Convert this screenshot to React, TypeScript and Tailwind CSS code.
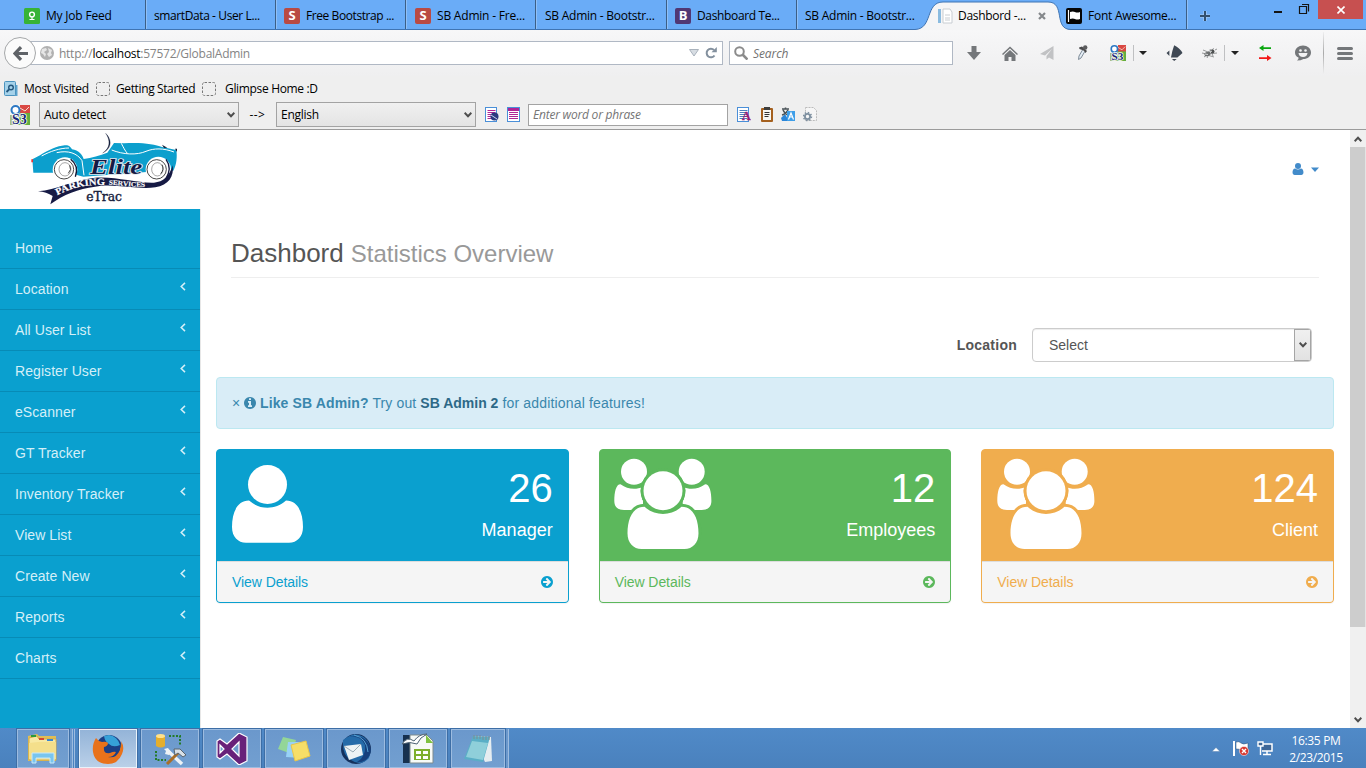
import React from "react";

const INFO_CIRCLE =
  "M1152 1376v-160q0-14-9-23t-23-9h-96v-512q0-14-9-23t-23-9h-320q-14 0-23 9t-9 23v160q0 14 9 23t23 9h96v320h-96q-14 0-23 9t-9 23v160q0 14 9 23t23 9h448q14 0 23-9t9-23zm-128-896v-160q0-14-9-23t-23-9h-192q-14 0-23 9t-9 23v160q0 14 9 23t23 9h192q14 0 23-9t9-23zm640 416q0 209-103 385.5t-279.5 279.5-385.5 103-385.5-103-279.5-279.5-103-385.5 103-385.5 279.5-279.5 385.5-103 385.5 103 279.5 279.5 103 385.5z";
const ARROW_CIRCLE =
  "M1413 896q0-27-18-45l-91-91-362-362q-18-18-45-18t-45 18l-91 91q-18 18-18 45t18 45l189 189h-502q-26 0-45 19t-19 45v128q0 26 19 45t45 19h502l-189 189q-19 19-19 45t19 45l91 91q18 18 45 18t45-18l362-362 91-91q18-18 18-45zm251 0q0 209-103 385.5t-279.5 279.5-385.5 103-385.5-103-279.5-279.5-103-385.5 103-385.5 279.5-279.5 385.5-103 385.5 103 279.5 279.5 103 385.5z";
const USER_BODY =
  "M17 35.6C22.500 40.500 29 42.700 35.500 42.700S48.500 40.500 54 35.600C66 35.600 71 48 71 62C71 72 65 77.700 57 77.700H14C6 77.700 0 72 0 62C0 48 5 35.600 17 35.600Z";

function GlyphIcon({ d, className }: { d: string; className: string }) {
  return (
    <svg viewBox="128 128 1536 1536" className={className} fill="currentColor">
      <path d={d} />
    </svg>
  );
}

function UserIcon({ className }: { className: string }) {
  return (
    <svg viewBox="0 0 71 78" className={className} fill="currentColor">
      <circle cx="35.500" cy="19.500" r="19.500" />
      <path d={USER_BODY} />
    </svg>
  );
}

function UsersIcon({ bg }: { bg: string }) {
  return (
    <svg viewBox="0 0 98 91" className="h-[91px] w-[98px]" fill="#fff">
      <circle cx="20" cy="13.700" r="13" />
      <circle cx="77.700" cy="13.700" r="13" />
      <path d="M6.500 26.300C11 29.500 15 30.800 20 30.800C23 30.800 26 30 29 29V52H10C4 52 .3 49 .3 43C.3 34 2 26.300 6.500 26.300Z" />
      <path d="M91.200 26.300C86.700 29.500 82.700 30.800 77.700 30.800C74.700 30.800 71.700 30 68.700 29V52H87.700C93.700 52 97.400 49 97.400 43C97.400 34 95.700 26.300 91.200 26.300Z" />
      <g transform="translate(13.500 13.200)">
        <circle cx="35.500" cy="19.500" r="22.400" fill={bg} />
        <path d={USER_BODY} stroke={bg} strokeWidth="6" />
        <circle cx="35.500" cy="19.500" r="22.400" fill={bg} />
        <path d={USER_BODY} />
        <circle cx="35.500" cy="19.500" r="19.500" />
      </g>
    </svg>
  );
}

function Logo() {
  return (
    <svg viewBox="90 12 465 225" className="h-[75px] w-[155px]">
      <path d="M97 94L120 82C145 66 172 54 194 52C208 51 212 58 216 64C236 68 246 78 251 93C275 90 300 82 322 74L342 45L372 46C420 42 465 48 486 57L529 66C532 85 530 110 520 128L440 132L250 146L228 140L165 134L100 134Z" fill="#0c9fcd" />
      <path d="M125 84C150 70 180 60 207 60M335 66C370 80 410 82 438 70C462 60 490 60 522 72M364 46C370 58 375 68 382 76M170 74C205 66 232 76 246 98L252 142" fill="none" stroke="#fff" strokeWidth="3" />
      <path d="M317 16C335 34 338 60 308 75C331 60 332 38 317 16Z" fill="#15203c" stroke="#15203c" strokeWidth=".8" />
      <path d="M94 94h5v9h-5z" fill="#e33" />
      <path d="M486 50l16 9-10 1z M525 62h6v10z" fill="#15203c" />
      <circle cx="195" cy="125" r="37" fill="#fff" />
      <circle cx="475" cy="124" r="38" fill="#fff" />
      <path d="M212 94Q238 114 226 146" fill="none" stroke="#121735" strokeWidth="4" />
      <g fill="none" stroke="#222">
        <circle cx="192" cy="124" r="29" strokeWidth="2.500" />
        <ellipse cx="195" cy="124" rx="18" ry="20" strokeWidth="1.200" />
        <circle cx="470" cy="124" r="29" strokeWidth="2.500" />
        <ellipse cx="472" cy="124" rx="17" ry="20" strokeWidth="1.200" />
        <path d="M209 112q7 13-4 24M486 110q8 14-4 27" strokeWidth="2.500" />
      </g>
      <path d="M114 190C170 186 215 157 280 150C340 143 410 166 462 164C490 162 508 145 518 112C523 145 506 172 466 178C410 186 340 164 285 176C235 182 190 200 151 229L158 204Q140 192 114 190Z" fill="#161a44" />
      <path d="M498 94Q517 120 498 152" fill="none" stroke="#161a44" strokeWidth="4" />
      <path id="ribbon-left" d="M172 202C215 178 262 169 320 171" fill="none" />
      <path id="ribbon-right" d="M326 170C360 171 395 179 438 176" fill="none" />
      <text fill="#fff" stroke="#fff" strokeWidth=".6" fontFamily="Liberation Serif, serif" fontWeight="700" fontSize="29">
        <textPath href="#ribbon-left" textLength="148" lengthAdjust="spacingAndGlyphs">PARKING</textPath>
      </text>
      <text fill="#fff" stroke="#fff" strokeWidth=".4" fontFamily="Liberation Serif, serif" fontWeight="700" fontSize="21">
        <textPath href="#ribbon-right" textLength="110" lengthAdjust="spacingAndGlyphs">SERVICES</textPath>
      </text>
      <text x="270" y="138" textLength="157" lengthAdjust="spacingAndGlyphs" fill="#151a44" stroke="#dfe6ee" strokeWidth="5" paintOrder="stroke" fontFamily="Liberation Serif, serif" fontStyle="italic" fontWeight="700" fontSize="64">Elite</text>
      <text x="259" y="219" textLength="107" lengthAdjust="spacingAndGlyphs" fill="#15203c" stroke="#15203c" strokeWidth="1.200" fontFamily="DejaVu Serif, serif" fontSize="37">eTrac</text>
    </svg>
  );
}

function S3Icon() {
  return (
    <svg viewBox="0 0 20 20" className="h-5 w-5">
      <rect width="20" height="20" fill="#f4f6f4" />
      <rect x="10" width="10" height="9" fill="#d94843" />
      <rect x="9" y="8" width="11" height="12" fill="#63ad3f" />
      <path d="M0 10h9v10H0z" fill="#a9bd8a" />
      <circle cx="5.500" cy="5" r="4" fill="#fff" stroke="#2c78c4" strokeWidth="2" />
      <path d="M10 3l5 3 4-4" stroke="#f5d9cc" fill="none" />
      <text x="2" y="18.500" fontSize="14" fontWeight="700" fontFamily="Liberation Serif, serif" fill="#182878" stroke="#fff" strokeWidth="1.600" paintOrder="stroke">S3</text>
    </svg>
  );
}

function SquareLetter({ letter, cls }: { letter: string; cls: string }) {
  return <span className={`flex h-4 w-4 shrink-0 items-center justify-center rounded-[2px] font-['Open_Sans',sans-serif] text-[13px] leading-none font-bold tracking-normal text-white ${cls}`}>{letter}</span>;
}

function Tab({ children, label, className = "" }: { children?: React.ReactNode; label: string; className?: string }) {
  return (
    <div className={`flex h-[29px] shrink-0 items-center gap-[6px] border-r border-[#3c5f86] pt-[2px] shadow-[1px_0_0_#8fc0f8] ${className}`}>
      {children}
      <span className="whitespace-nowrap">{label}</span>
    </div>
  );
}

function TabStrip() {
  return (
    <div className="relative flex h-[30px] border-b border-[#3f74b3] bg-[#6aacf7]">
      <Tab label="My Job Feed" className="w-[146px] pl-6 tracking-[-0.2px]">
        <svg viewBox="0 0 16 16" className="h-4 w-4"><rect width="16" height="16" rx="1.500" fill="#37b337" /><circle cx="8" cy="6.500" r="2.400" fill="none" stroke="#fff" strokeWidth="1.400" /><path d="M8 9v3M5.500 11.500h5" stroke="#fff" strokeWidth="1.200" /></svg>
      </Tab>
      <Tab label="smartData - User L..." className="w-[130px] pl-2 tracking-[-0.4px]" />
      <Tab label="Free Bootstrap ..." className="w-[130px] pl-2 tracking-[-0.42px]"><SquareLetter letter="S" cls="bg-[#b94a43]" /></Tab>
      <Tab label="SB Admin - Fre..." className="w-[130px] pl-[9px] tracking-[-0.2px]"><SquareLetter letter="S" cls="bg-[#b94a43]" /></Tab>
      <Tab label="SB Admin - Bootstr..." className="w-[131px] pl-[9px] tracking-[-0.25px]" />
      <Tab label="Dashboard Te..." className="w-[130px] pl-2 tracking-[-0.35px]"><SquareLetter letter="B" cls="bg-[#503773]" /></Tab>
      <div className="flex h-[29px] w-[118px] shrink-0 items-center pt-[2px] pl-2"><span className="tracking-[-0.25px] whitespace-nowrap">SB Admin - Bootstr...</span></div>
      <div className="relative h-[30px] w-[144px] shrink-0">
        <svg viewBox="0 0 156 29" className="absolute top-[1px] left-0 h-[29px] w-[156px]">
          <path d="M0 28.500C18 28 10 1 28 1H133C151 1 138 28.500 156 28.500V29H0Z" fill="#f5f5f6" />
          <path d="M0 28.500C18 28 10 1 28 1H133C151 1 138 28.500 156 28.500" fill="none" stroke="#3f74b3" />
        </svg>
        <div className="relative flex h-[29px] items-center pt-[2px] pl-[22px]">
          <svg viewBox="0 0 16 16" className="h-4 w-4"><path d="M1 1h3v14H1z" fill="#8abbe0" /><path d="M6 1h7l2 3v11H6z" fill="#fff" stroke="#c8cdd2" /><path d="M8 7h5M8 10h5M8 12h5" stroke="#c8cdd2" /></svg>
          <span className="ml-[5px] w-[80px] tracking-[-0.3px] whitespace-nowrap">Dashbord -...</span>
          <svg viewBox="0 0 8 8" className="h-2 w-2"><path d="M1 1l6 6M7 1L1 7" stroke="#85888b" strokeWidth="2.200" /></svg>
        </div>
      </div>
      <Tab label="Font Awesome..." className="w-[128px] pl-[7px] tracking-[-0.25px]">
        <svg viewBox="0 0 16 16" className="h-4 w-4"><rect width="16" height="16" rx="2" fill="#050505" /><path d="M2.500 2v12" stroke="#fff" strokeWidth="1.200" /><path d="M4 4q3-1 5 0t5 0v7q-3 1-5 0t-5 0z" fill="#fff" /></svg>
      </Tab>
      <svg viewBox="0 0 12 12" className="mt-[10px] ml-[12px] h-3 w-3 shrink-0"><path d="M6 1v10M1 6h10" stroke="#a9cdf8" strokeWidth="3.200" /><path d="M6 1v10M1 6h10" stroke="#34516f" strokeWidth="2" /></svg>
      <div className="ml-auto flex shrink-0">
        <svg viewBox="0 0 44 20" className="h-5 w-[44px]"><path d="M0 12h8" stroke="#141414" strokeWidth="2" /><path d="M25.500 6.500h7v7h-7zM28 4.500h6.500v7" fill="none" stroke="#141414" strokeWidth="1.200" /></svg>
        <div className="mr-[3px] flex h-[19px] w-[45px] items-center justify-center bg-[#c75050]">
          <svg viewBox="0 0 8 8" className="h-2 w-2"><path d="M.5.5l7 7M7.500.5l-7 7" stroke="#fff" strokeWidth="1.600" /></svg>
        </div>
      </div>
    </div>
  );
}

function Caret() {
  return <svg viewBox="0 0 8 4" className="h-1 w-2"><path d="M0 0h8L4 4z" fill="#222" /></svg>;
}

function NavRow() {
  return (
    <div className="flex h-[46px] items-center bg-linear-to-b from-[#f7f7f8] to-[#efeff0]">
      <div className="relative z-10 ml-1 flex h-8 w-8 shrink-0 items-center justify-center rounded-full border border-[#a5a7a9] bg-[#fbfbfb]">
        <svg viewBox="0 0 14 14" className="h-[15px] w-[15px]"><path d="M7.500 1L1.800 7l5.700 6M2 7h12" fill="none" stroke="#5f6368" strokeWidth="3" /></svg>
      </div>
      <div className="-ml-[6px] flex h-6 w-[693px] shrink-0 items-center border border-[#b0b8c4] bg-white pl-[9px]">
        <svg viewBox="0 0 14 14" className="h-[14px] w-[14px]"><circle cx="7" cy="7" r="7" fill="#b1b1b1" /><path d="M2 3l4-1 1 2-3 2 2 2-1 3-2-3-2-1zM8 2l4 2-1 3 1 2-3 2-2-3 2-2z" fill="#e6e6e6" /></svg>
        <span className="ml-[5px] pt-[2px] tracking-[-0.26px] text-[#848484]">http://<span className="text-black">localhost</span>:57572/GlobalAdmin</span>
        <svg viewBox="0 0 10 8" className="mr-[6px] ml-auto h-2 w-[10px]"><path d="M.5.5h9L5 7z" fill="#d7dde3" stroke="#a9b2bc" /></svg>
        <svg viewBox="0 0 12 12" className="mr-[5px] h-3 w-3"><path d="M9.500 8.500A4.300 4.300 0 1 1 9 3" fill="none" stroke="#83909e" strokeWidth="2" /><path d="M11.800 0v5.200H6.500z" fill="#83909e" /></svg>
      </div>
      <div className="ml-[6px] flex h-6 w-[224px] shrink-0 items-center border border-[#b0b8c4] bg-white pl-[4px] text-[#727272] italic">
        <svg viewBox="0 0 14 14" className="h-[14px] w-[14px]"><circle cx="5.500" cy="5.500" r="4.300" fill="none" stroke="#8b8b8b" strokeWidth="2" /><path d="M8.500 8.500l5 5" stroke="#8b8b8b" strokeWidth="2.600" /></svg>
        <span className="ml-[5px] pt-[2px] tracking-[-0.1px]">Search</span>
      </div>
      <div className="ml-[3px] flex h-full flex-1 items-center">
        <div className="flex w-9 justify-center"><svg viewBox="0 0 14 14" className="h-[14px] w-[14px]"><path d="M4.500 0h5v6H14l-7 8-7-8h4.500z" fill="#74777a" /></svg></div>
        <div className="flex w-9 justify-center"><svg viewBox="0 0 16 15" className="h-[15px] w-4"><path d="M0 8L8 .5 16 8l-1 1-7-6.500L1 9z" fill="#74777a" /><path d="M2.500 9L8 4l5.500 5v6H9.500v-4h-3v4h-4z" fill="#74777a" /></svg></div>
        <div className="flex w-[38px] justify-center"><svg viewBox="0 0 14 14" className="h-[14px] w-[14px]"><path d="M13.500 0v14L9 11.500 6.500 13.500V10L12 3 5 9.500 0 8z" fill="#c1c2c4" /></svg></div>
        <div className="flex w-8 justify-center"><svg viewBox="0 0 12 16" className="h-4 w-3"><path d="M6.500 5L3 11l-.5 3.500L5 13 8.500 7" fill="#e4edf5" stroke="#7e8b98" /><path d="M3 2.500l3-1L11 6l-1.500 2-2-2.500L3.500 4z" fill="#4a4a4c" /><circle cx="9.200" cy="2.500" r="2.200" fill="#5c5c5e" /></svg></div>
        <div className="flex w-[35px] justify-center pl-[5px]"><span className="scale-80"><S3Icon /></span></div>
        <span className="h-4 w-px bg-[#bfc0c2]" />
        <div className="flex w-[18px] justify-center"><Caret /></div>
        <div className="flex w-11 justify-center"><svg viewBox="778 134 52 50" className="h-4 w-[17px]"><path d="M803 135Q820 143 829 159L813 173H793Q796 154 803 135ZM788 151V168L779 159ZM796 178H811L803 184Z" fill="#3f4854" /></svg></div>
        <div className="flex w-7 justify-center"><svg viewBox="0 0 16 12" className="h-3 w-4"><path d="M1 3l5 2 6-3.500M0 6l5 1 10-1M2 10l3-2 7 2M8 2l3 7M13 3l2-1M5 11l2-4" stroke="#8b8d8e" strokeWidth=".9" fill="none" /><ellipse cx="5.500" cy="7" rx="3.200" ry="2" fill="#6b6e6f" transform="rotate(-20 5.500 7)" /><circle cx="10.500" cy="4.500" r="2" fill="#4d5051" /><path d="M3 7l3 .5M8 5l2-1" stroke="#d7d9da" /></svg></div>
        <span className="h-4 w-px bg-[#bfc0c2]" />
        <div className="flex w-5 justify-center"><Caret /></div>
        <div className="flex w-10 justify-center"><svg viewBox="0 0 14 16" className="h-4 w-[14px]"><path d="M1 3l4.500-3v2.200H13v1.800H5.500V6z" fill="#0aa60f" /><path d="M13.500 13L9 10v2.200H1v1.800h8V16z" fill="#f21818" /></svg></div>
        <div className="flex w-9 justify-center"><svg viewBox="0 0 16 16" className="h-4 w-4"><path d="M8 .5C12.500.5 16 3.500 16 7.500S12.500 14 8.500 14Q6 15.500 2 15.500 4 14 3.500 12.500 0 11 0 7.500C0 3.500 3.500.5 8 .5z" fill="#74777a" /><circle cx="5.500" cy="5.500" r="1.300" fill="#f3f3f4" /><circle cx="10.500" cy="5.500" r="1.300" fill="#f3f3f4" /><path d="M3.500 8h9Q12 12 8 12T3.500 8z" fill="#f3f3f4" /></svg></div>
        <span className="ml-[2px] h-[42px] w-px bg-linear-to-b from-[#efeff0] via-[#aaa] to-[#efeff0]" />
        <div className="flex w-[42px] justify-center"><svg viewBox="0 0 16 13" className="h-[13px] w-4"><path d="M1.500 1.500h13M1.500 6.500h13M1.500 11.500h13" stroke="#74777a" strokeWidth="3" strokeLinecap="round" /></svg></div>
      </div>
    </div>
  );
}

function DashedSquare() {
  return <svg viewBox="0 0 14 14" className="h-[14px] w-[14px]"><rect x=".5" y=".5" width="13" height="13" rx="2" fill="none" stroke="#777" strokeDasharray="2.500 1.500" /></svg>;
}

function Chevron({ className = "" }: { className?: string }) {
  return <svg viewBox="0 0 8 6" className={`h-[6px] w-2 ${className}`}><path d="M.6.800L4 4.300 7.400.800" fill="none" stroke="#4d4d4d" strokeWidth="2" /></svg>;
}

function ToolbarSelect({ label }: { label: string }) {
  return (
    <div className="flex h-[25px] w-[200px] items-center justify-between border border-[#a3a3a3] bg-linear-to-b from-[#f0f0f0] to-[#e4e4e4] pr-[3px] pl-1">
      <span className="pt-px tracking-[-0.25px]">{label}</span>
      <Chevron />
    </div>
  );
}

function PageIcon({ kind }: { kind: "globe" | "plain" | "letter" }) {
  return (
    <svg viewBox="0 0 14 15" className="h-[15px] w-[14px]">
      <rect x=".5" y=".5" width={kind === "plain" ? 12 : 11} height="14" fill="#fff" stroke="#4a8fd8" />
      {kind === "plain" ? <path d="M1 1h11v3H1z" fill="#b02497" /> : null}
      <path d={kind === "plain" ? "M2 5.500h9M2 7.500h9M2 9.500h9M2 11.500h9" : "M2.500 3.500h8M2.500 5.500h8M2.500 7.500h8M2.500 9.500h8M2.500 11.500h8"} stroke={kind === "letter" ? "#4d7fbd" : "#b02497"} />
      {kind === "globe" ? <g><circle cx="9.500" cy="9.500" r="4" fill="#2c397f" /><path d="M6 8l6 4" stroke="#cdd4f2" /></g> : null}
      {kind === "letter" ? <text x="5" y="13" fontSize="12" fontWeight="700" fontFamily="Liberation Serif, serif" fill="#9a1b72" stroke="#9a1b72" strokeWidth=".3">A</text> : null}
    </svg>
  );
}

function Toolbars() {
  return (
    <div className="h-[54px] border-b border-[#9b9b9b] bg-[#efefef]">
      <div className="flex h-[25px] items-center pl-1">
        <svg viewBox="0 0 14 16" className="h-4 w-[14px]"><path d="M2 4h11.500v11H2z" fill="#5da3cd" /><rect x=".5" y=".5" width="11" height="14" rx="1" fill="#a5d2ea" stroke="#4b93be" /><circle cx="7" cy="6.500" r="2.300" fill="none" stroke="#24577d" strokeWidth="1.400" /><path d="M5 8.500l-2.500 2.500" stroke="#24577d" strokeWidth="1.800" /></svg>
        <span className="ml-[6px] w-[72px] tracking-[-0.3px] whitespace-nowrap">Most Visited</span>
        <DashedSquare />
        <span className="ml-[6px] w-[86px] tracking-[-0.38px] whitespace-nowrap">Getting Started</span>
        <DashedSquare />
        <span className="ml-[9px] tracking-[-0.33px] whitespace-nowrap">Glimpse Home :D</span>
      </div>
      <div className="flex h-[27px] items-center pl-[10px]">
        <S3Icon />
        <span className="ml-[9px]"><ToolbarSelect label="Auto detect" /></span>
        <span className="w-[37px] text-center tracking-[0.4px]">--&gt;</span>
        <ToolbarSelect label="English" />
        <span className="ml-[9px]"><PageIcon kind="globe" /></span>
        <span className="ml-2"><PageIcon kind="plain" /></span>
        <div className="ml-[7px] flex h-[22px] w-[200px] items-center border border-[#a3a3a3] bg-white pl-1 tracking-[-0.22px] text-[#757575] italic">Enter word or phrase</div>
        <span className="ml-[9px]"><PageIcon kind="letter" /></span>
        <svg viewBox="0 0 12 15" className="ml-[10px] h-[15px] w-3"><rect y="1" width="12" height="14" rx="1" fill="#a4601f" /><rect x="2" y="3" width="8" height="10" fill="#f7f7f4" /><rect x="3" width="6" height="3" fill="#3d3d3d" /><path d="M3.500 5.500h5M3.500 7.500h5M3.500 9.500h4" stroke="#333" /></svg>
        <svg viewBox="0 0 14 15" className="ml-2 h-[15px] w-[14px]"><path d="M0 11l4-4 4 7H1z" fill="#2b85d8" /><path d="M1 2h7M4.500.5v1.500M2 3q2 4 5 5M7 3Q5 7 1 8" fill="none" stroke="#4a5358" strokeWidth="1.500" /><rect x="6" y="4" width="8" height="10" fill="#3e9ee8" /><path d="M7.500 12.500L10 6l2.500 6.500M8.500 10h3" fill="none" stroke="#fff" strokeWidth="1.200" /></svg>
        <svg viewBox="0 0 14 15" className="ml-2 h-[15px] w-[14px]"><path d="M2.500.5h8l3 3v10h-11z" fill="#f6f6f6" stroke="#bbb" strokeDasharray="2 1" /><circle cx="4.500" cy="9.500" r="2.600" fill="none" stroke="#7e90a0" strokeWidth="1.800" /><circle cx="4.500" cy="9.500" r="4" fill="none" stroke="#7e90a0" strokeWidth="1.500" strokeDasharray="1.500 1.600" /></svg>
      </div>
    </div>
  );
}

function PageHeader() {
  return (
    <header className="flex h-[79px] shrink-0 items-start justify-between">
      <div className="pt-[2px] pl-[30px]"><Logo /></div>
      <div className="mt-[33px] mr-[31px] flex items-center gap-[7px] text-[#428bca]">
        <UserIcon className="h-3 w-3" />
        <svg viewBox="0 0 8 5" className="h-[5px] w-2"><path d="M0 .5h8L4 5z" fill="currentColor" /></svg>
      </div>
    </header>
  );
}

const MENU = ["Home", "Location", "All User List", "Register User", "eScanner", "GT Tracker", "Inventory Tracker", "View List", "Create New", "Reports", "Charts"];

function Sidebar() {
  return (
    <nav className="w-[200px] shrink-0 bg-[#0aa0cf] pt-[19px]">
      {MENU.map((item, i) => (
        <div key={item} className="flex h-[41px] items-start justify-between border-b border-[#078bb6] pt-[10px] pr-[14px] pl-[15px] leading-5 tracking-[0.07px] text-[#d4eff8]">
          <span>{item}</span>
          {i > 0 ? <svg viewBox="0 0 6 9" className="mt-[3px] h-[9px] w-[6px]"><path d="M5 .9L1.200 4.500 5 8.100" fill="none" stroke="#d4eff8" strokeWidth="1.500" /></svg> : null}
        </div>
      ))}
    </nav>
  );
}

const CARDS = [
  { count: "26", label: "Manager", color: "#0aa0cf", box: "bg-[#0aa0cf] border-[#0aa0cf]", text: "text-[#0aa0cf]", single: true },
  { count: "12", label: "Employees", color: "#5cb85c", box: "bg-[#5cb85c] border-[#5cb85c]", text: "text-[#5cb85c]", single: false },
  { count: "124", label: "Client", color: "#f0ad4e", box: "bg-[#f0ad4e] border-[#f0ad4e]", text: "text-[#f0ad4e]", single: false },
];

function Card({ card }: { card: (typeof CARDS)[number] }) {
  return (
    <div className={`h-[154px] overflow-hidden rounded-[4px] border shadow-[0_1px_1px_rgba(0,0,0,0.05)] ${card.box}`}>
      <div className="flex h-[111px] justify-between pr-[15px] pl-[15px] text-white">
        <div className={card.single ? "pt-[15px]" : "-ml-[0.5px] pt-[8px]"}>
          {card.single ? <UserIcon className="h-[78px] w-[71px]" /> : <UsersIcon bg={card.color} />}
        </div>
        <div className="pt-[16px] text-right">
          <div className="text-[40px] leading-[44px]">{card.count}</div>
          <div className="mt-[7px] text-[18px] leading-[26px]">{card.label}</div>
        </div>
      </div>
      <div className={`flex h-[41px] items-center justify-between border-t border-[#ddd] bg-[#f5f5f5] px-[15px] ${card.text}`}>
        <span className="tracking-[-0.06px]">View Details</span>
        <GlyphIcon d={ARROW_CIRCLE} className="h-3 w-3" />
      </div>
    </div>
  );
}

function Dashboard() {
  return (
    <main className="flex min-w-0 flex-1 flex-col border-l border-[#e7e7e7] pr-4 pl-[15px]">
      <h1 className="mr-[15px] ml-[15px] flex h-[69px] items-baseline gap-[7px] border-b border-[#eee] pt-[26px] text-[26px] leading-9 text-[#555]">
        Dashbord <small className="text-[24px] text-[#999]">Statistics Overview</small>
      </h1>
      <div className="mt-[50px] mr-[22px] flex h-[34px] items-center justify-end">
        <label className="mr-[15px] font-bold tracking-[0.25px] text-[#555]">Location</label>
        <div className="flex h-[34px] w-[280px] items-center justify-between overflow-hidden rounded-[4px] border border-[#ccc] pl-4 text-[#555] shadow-[inset_0_1px_1px_rgba(0,0,0,0.075)]">
          <span>Select</span>
          <span className="flex h-full w-[17px] items-center justify-center border border-[#a5a5a5] bg-linear-to-b from-[#f0f0f0] to-[#e2e2e2]"><Chevron /></span>
        </div>
      </div>
      <div className="mt-[15px] flex h-[52px] items-center rounded-[4px] border border-[#bce8f1] bg-[#d9edf7] pl-[15px] text-[#3a87ad]">
        <span className="w-3">×</span>
        <GlyphIcon d={INFO_CIRCLE} className="mr-1 h-3 w-3" />
        <span className="whitespace-pre"><b className="tracking-[0.13px]">Like SB Admin?</b><span className="tracking-[0.12px]"> Try out </span><b className="text-[#2d6987]">SB Admin 2</b><span className="tracking-[0.17px]"> for additional features!</span></span>
      </div>
      <div className="mt-5 grid grid-cols-3 gap-[30px]">
        {CARDS.map((c) => <Card key={c.label} card={c} />)}
      </div>
    </main>
  );
}

function Scrollbar() {
  return (
    <div className="flex w-4 shrink-0 flex-col items-center bg-[#f0f0f0] pb-[5px]">
      <Chevron className="mt-[6px] mb-[5px] shrink-0 rotate-180" />
      <div className="h-[480px] w-full shrink-0 border-r border-[#e4e4e4] bg-[#cdcdcd]" />
      <Chevron className="mt-auto" />
    </div>
  );
}

function TaskButton({ children, active = false, stacked = "" }: { children: React.ReactNode; active?: boolean; stacked?: "" | "two" | "one" }) {
  return (
    <div className="flex h-[39px] shrink-0">
      <div className={`flex h-full items-center justify-center border outline outline-[#3d6ea6] ${stacked === "two" ? "w-[52px]" : stacked === "one" ? "w-[54px]" : "w-[58px]"} ${active ? "border-[#e9f2fa] bg-linear-to-b from-[#94b4d8] to-[#bad0e8]" : "border-[#9dbce0] bg-linear-to-b from-[#6b98cc] to-[#729fd0]"}`}>{children}</div>
      {stacked ? <div className="ml-px w-[3px] border-r border-[#9dbce0] bg-[#6b98cc]" /> : null}
      {stacked === "two" ? <div className="ml-px w-px bg-[#9dbce0]" /> : null}
    </div>
  );
}

function Taskbar() {
  return (
    <footer className="flex h-10 items-center bg-linear-to-b from-[#508ac8] to-[#4a81bd]">
      <div className="ml-[17px] flex gap-1 pt-px">
        <TaskButton stacked="two">
          <svg viewBox="0 0 32 32" className="h-8 w-8"><path d="M1 3l9-2 2 2h17v25H1z" fill="#dfbd55" /><path d="M2 5l8-2 2 3h17v21H2z" fill="#f8e9a3" stroke="#d1aa48" /><path d="M4 2h5v2H4z" fill="#2b9b3a" /><path d="M12 5h5v2h-5z" fill="#d64532" /><path d="M20 6h6v2h-6z" fill="#3a86cf" /><path d="M2 10q14-2 27-1v17H2z" fill="#f4df8b" /><path d="M5 20h22v10h-4v-5H9v5H5z" fill="#79c5ee" stroke="#c7e9fb" /></svg>
        </TaskButton>
        <TaskButton active>
          <svg viewBox="0 0 32 32" className="h-8 w-8"><circle cx="17" cy="15" r="13" fill="#1b3f85" /><path d="M17 2a13 13 0 0 1 11 10q-7 3-11-1-4-2-5-8z" fill="#36a1d8" /><path d="M29 10q2 6-1 12-5 8-14 7 15-2 15-19z" fill="#f9b928" /><path d="M4 5q2 3 6 4 4-1 6 1 0 3-4 4-1 7 6 6 4-2 6-1-2 5-8 5 8 2 12-7 2-5 1-9 4 6 1 13-4 10-14 10Q3 31 1 19 0 11 4 5z" fill="#e8721b" /></svg>
        </TaskButton>
        <TaskButton>
          <svg viewBox="0 0 32 34" className="h-[34px] w-8"><path d="M2 4v10q5 3 9 0V4z" fill="#e5ae2d" /><ellipse cx="6.500" cy="4" rx="4.500" ry="2" fill="#ffe18b" /><path d="M15 4h11v10M2 19v9h10" fill="none" stroke="#247a29" strokeWidth="2" strokeDasharray="2 1.500" /><path d="M14 19l14 13" stroke="#edf2f5" strokeWidth="3.500" /><path d="M10 17l4-1 3 4-2 3-4-1 1-3z" fill="#edf2f5" /><path d="M25 20L13 32" stroke="#a96e27" strokeWidth="3" /><path d="M20 17l6 0 6 6-3 2-5-4-3 2z" fill="#d9e1e7" stroke="#59646e" /></svg>
        </TaskButton>
        <TaskButton>
          <svg viewBox="0 0 32 32" className="h-8 w-8"><path fillRule="evenodd" d="M23 0l8 4v24l-8 4-12-11-7 5-3-2V8l3-2 7 5zM23 9l-7 7 7 7zM4 12v8l4-4z" fill="#68217a" stroke="#fff" strokeWidth="1.200" /></svg>
        </TaskButton>
        <TaskButton>
          <svg viewBox="0 0 34 28" className="h-7 w-[34px]"><path d="M6 2l13 3-4 14L1 14z" fill="#93d698" /><path d="M11 7l14 0-1 16-15-1z" fill="#98d2f6" /><path d="M14 10l15-4 4 15-15 5z" fill="#f6de68" stroke="#e7c54c" /></svg>
        </TaskButton>
        <TaskButton>
          <svg viewBox="0 0 32 32" className="h-8 w-8"><circle cx="16" cy="16" r="15" fill="#15315d" /><path d="M3 7Q15-3 25 5q8 8 4 20-8 9-18 2-9-4-8-20z" fill="#256ba9" /><path d="M4 13l17-2 2 11-14 5z" fill="#edf3f5" /><path d="M4 13l9 6 8-8" fill="none" stroke="#9badb7" /><path d="M9 4q12-2 16 8 1 12-8 17 12 1 14-12Q27 0 9 4z" fill="#17407d" /><path d="M14 2q13 3 14 17" fill="none" stroke="#58a2d2" /></svg>
        </TaskButton>
        <TaskButton>
          <svg viewBox="0 0 32 34" className="h-[34px] w-8"><path d="M1 3h7v28H1z" fill="#17314f" /><path d="M8 3h17l6 6v22H8z" fill="#f7faf7" stroke="#7e8b8d" /><path d="M24 3l7 8h-7z" fill="#7fc241" /><path d="M0 12Q5 4 12 9q5-7 13-7-7 3-10 10-7-3-15 0z" fill="#fff" stroke="#4e6374" /><rect x="12" y="17" width="16" height="11" fill="#7eaf2d" /><path d="M14 19h5v3h-5zM21 19h5v3h-5zM14 24h5v3h-5zM21 24h5v3h-5z" fill="#fff" /></svg>
        </TaskButton>
        <TaskButton stacked="one">
          <svg viewBox="0 0 32 32" className="h-8 w-8"><path d="M11 3l18 1 1 24-7 1z" fill="#e6edf0" /><path d="M11 3l17 1-7 25-19-3z" fill="#5aaec6" /><path d="M10 8l16 2-5 17-17-3z" fill="#8fcfda" /><path d="M12 2v4M15 2v4M18 2v4M21 3v4M24 3v4M27 3v4" stroke="#7d8c93" /></svg>
        </TaskButton>
      </div>
      <div className="mr-[23px] ml-auto flex items-center text-white">
        <svg viewBox="0 0 8 5" className="mt-[2px] mr-[13px] h-[5px] w-2"><path d="M0 4.500L4 .5l4 4z" fill="#fff" stroke="#416fa3" strokeWidth=".4" /></svg>
        <svg viewBox="0 0 16 16" className="mr-2 h-4 w-4"><path d="M1 1v15" stroke="#fff" strokeWidth="2" /><path d="M3 2q3-1 5 1t7 0v7q-3 1-6 0T3 9z" fill="#fff" stroke="#25496f" strokeWidth=".5" /><circle cx="11" cy="11" r="4.600" fill="#d83b32" stroke="#fff" strokeWidth=".5" /><path d="M9 9l4 4M13 9l-4 4" stroke="#fff" strokeWidth="1.400" /></svg>
        <svg viewBox="0 0 16 15" className="mr-4 h-[15px] w-4"><path d="M5 3h10v7H5M10 10v3M6 13.500h8" fill="#3f6797" stroke="#fff" strokeWidth="1.500" /><path d="M1 1h5v4H1zM3.500 5v9" fill="#3f6797" stroke="#fff" strokeWidth="1.400" /></svg>
        <div className="w-[54px] pt-px text-center leading-[17px] tracking-[-0.35px] whitespace-nowrap"><div>16:35 PM</div><div>2/23/2015</div></div>
      </div>
    </footer>
  );
}

export default function App() {
  return (
    <div className="flex h-[768px] w-[1366px] flex-col overflow-hidden bg-white font-['Open_Sans','Noto_Sans',sans-serif] text-[12px] text-black">
      <TabStrip />
      <NavRow />
      <Toolbars />
      <div className="flex h-[598px] font-['Liberation_Sans',Arial,sans-serif] text-[14px] leading-5">
        <div className="flex min-w-0 flex-1 flex-col">
          <PageHeader />
          <div className="flex flex-1">
            <Sidebar />
            <Dashboard />
          </div>
        </div>
        <Scrollbar />
      </div>
      <Taskbar />
    </div>
  );
}
